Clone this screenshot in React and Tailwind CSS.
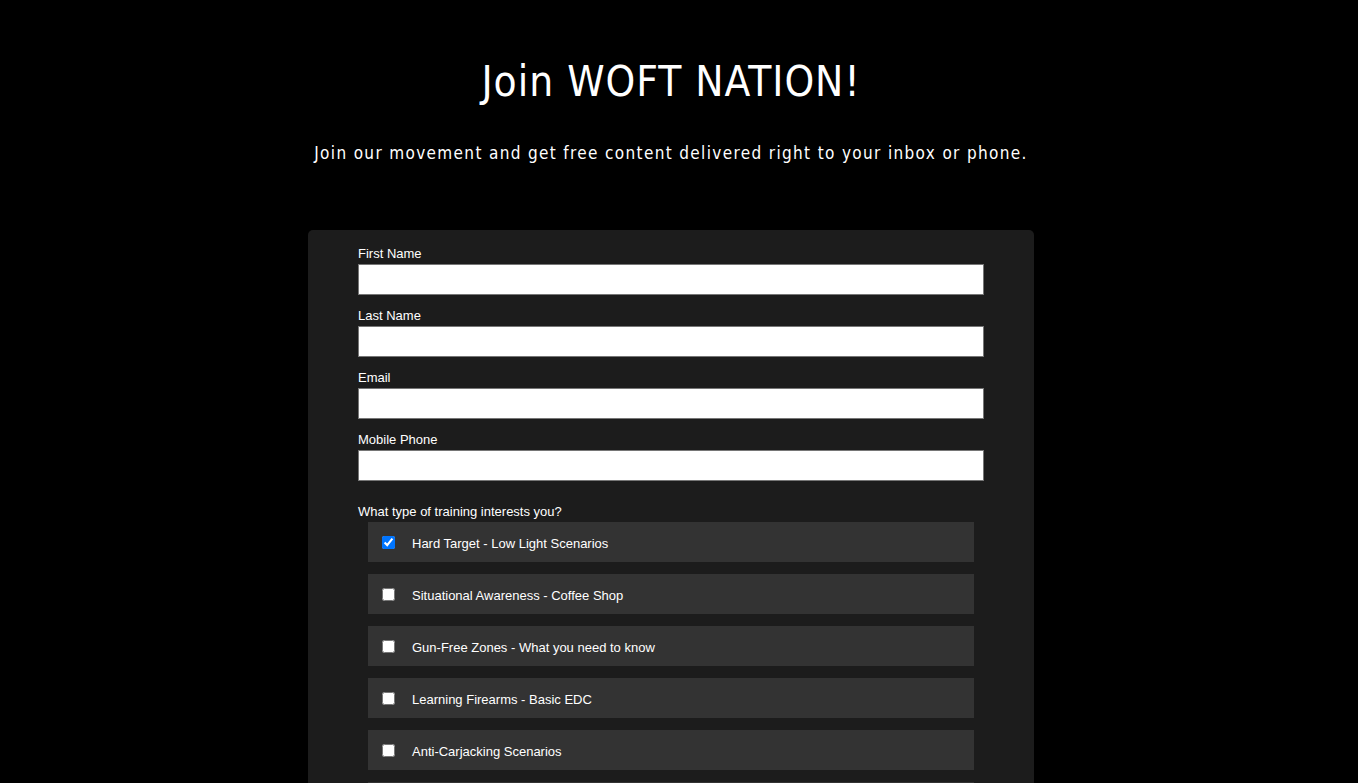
import React from "react";

const fields = ["First Name", "Last Name", "Email", "Mobile Phone"];
const options = [
  ["Hard Target - Low Light Scenarios", true],
  ["Situational Awareness - Coffee Shop", false],
  ["Gun-Free Zones - What you need to know", false],
  ["Learning Firearms - Basic EDC", false],
  ["Anti-Carjacking Scenarios", false],
];

export default function App() {
  return (
    <div className="min-h-[783px] bg-black text-white flex flex-col items-center pr-[16px]">
      <h1
        className="mt-[57px] text-[42px] leading-[50px] tracking-[1px] text-white"
        style={{ fontFamily: '"DejaVu Sans Condensed", "DejaVu Sans", sans-serif' }}
      >
        Join WOFT NATION!
      </h1>
      <p
        className="mt-[34px] text-[17px] leading-[24px] tracking-[1.35px] text-white"
        style={{ fontFamily: '"DejaVu Sans Condensed", "DejaVu Sans", sans-serif' }}
      >
        Join our movement and get free content delivered right to your inbox or phone.
      </p>
      <div
        className="mt-[65px] w-[726px] bg-[#1c1c1c] rounded-[5px] px-[50px] pt-[16px] pb-[40px]"
        style={{ fontFamily: '"Liberation Sans", Arial, sans-serif' }}
      >
        {fields.map((f, i) => (
          <div key={f} className={i === 0 ? "" : "mt-[13px]"}>
            <div className="text-[13px] leading-[15px] text-white">{f}</div>
            <input
              type="text"
              className="mt-[3px] block w-[626px] h-[31px] bg-white border border-[#767676] outline-none"
            />
          </div>
        ))}
        <div className="mt-[23px] text-[13px] leading-[15px] text-white">
          What type of training interests you?
        </div>
        <div className="mt-[3px] mx-[10px] flex flex-col gap-[12px]">
          {options.map(([label, checked]) => (
            <label
              key={label}
              className="h-[40px] bg-[#333333] flex items-center pl-[14px] text-[13px] text-white"
            >
              <input
                type="checkbox"
                defaultChecked={checked}
                className="w-[13px] h-[13px] m-0"
              />
              <span className="ml-[17px] pt-[4px]">{label}</span>
            </label>
          ))}
          <div className="h-[40px] bg-[#333333]" />
        </div>
      </div>
    </div>
  );
}
